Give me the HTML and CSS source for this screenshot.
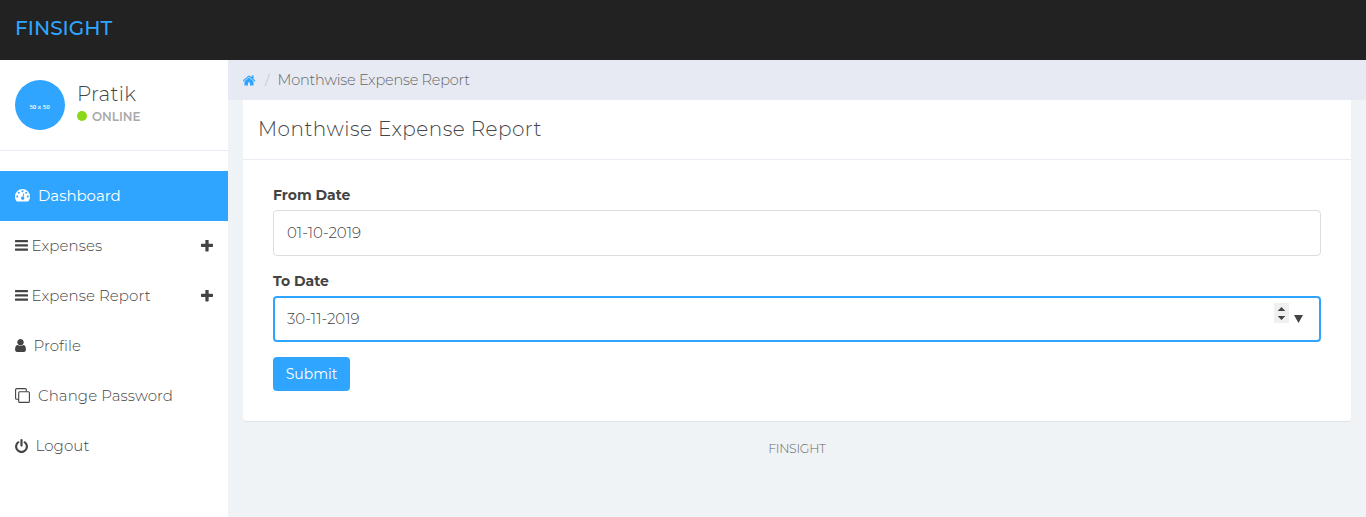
FILE: index.html
```html
<!DOCTYPE html>
<html lang="en">
<head>
<meta charset="utf-8">
<title>FINSIGHT</title>
<link rel="stylesheet" href="styles.css">
</head>
<body>
<header class="navbar"><a class="brand">FINSIGHT</a></header>
<div class="layout">
  <aside class="sidebar">
    <div class="profile">
      <div class="avatar">50 x 50</div>
      <div class="who">
        <div class="name">Pratik</div>
        <div class="status"><span class="dot"></span><span class="online">ONLINE</span></div>
      </div>
    </div>
    <nav class="menu">
      <a class="item active">
        <svg class="icon dash" viewBox="0 0 15 13"><path fill-rule="evenodd" d="M7.5 0A7.5 7.5 0 0 0 0 7.5c0 1.7.5 3.2 1.4 4.6.2.3.4.4.7.4h10.8c.3 0 .5-.1.7-.4.9-1.4 1.4-2.9 1.4-4.6A7.5 7.5 0 0 0 7.5 0zM2.2 6.500a1 1 0 1 1 0 2 1 1 0 0 1 0-2zM3.800 2.800a1 1 0 1 1 0 2 1 1 0 0 1 0-2zM7.500 1.200a1 1 0 1 1 0 2 1 1 0 0 1 0-2zM11.200 2.800a1 1 0 1 1 0 2 1 1 0 0 1 0-2zM12.800 6.500a1 1 0 1 1 0 2 1 1 0 0 1 0-2zM8.500 4.300l.8.200-.8 3.200a1.650 1.650 0 1 1-.85-.2z"/></svg>
        <span>Dashboard</span>
      </a>
      <a class="item">
        <svg class="icon bars" viewBox="0 0 13 11"><rect width="13" height="2.200" rx=".5"/><rect y="4.300" width="13" height="2.200" rx=".5"/><rect y="8.600" width="13" height="2.200" rx=".5"/></svg>
        <span>Expenses</span>
        <svg class="plus" viewBox="192 192 1408 1408"><path d="M1600 736v192q0 40-28 68t-68 28h-416v416q0 40-28 68t-68 28h-192q-40 0-68-28t-28-68v-416h-416q-40 0-68-28t-28-68v-192q0-40 28-68t68-28h416v-416q0-40 28-68t68-28h192q40 0 68 28t28 68v416h416q40 0 68 28t28 68z"/></svg>
      </a>
      <a class="item">
        <svg class="icon bars" viewBox="0 0 13 11"><rect width="13" height="2.200" rx=".5"/><rect y="4.300" width="13" height="2.200" rx=".5"/><rect y="8.600" width="13" height="2.200" rx=".5"/></svg>
        <span>Expense Report</span>
        <svg class="plus" viewBox="192 192 1408 1408"><path d="M1600 736v192q0 40-28 68t-68 28h-416v416q0 40-28 68t-68 28h-192q-40 0-68-28t-28-68v-416h-416q-40 0-68-28t-28-68v-192q0-40 28-68t68-28h416v-416q0-40 28-68t68-28h192q40 0 68 28t28 68v416h416q40 0 68 28t28 68z"/></svg>
      </a>
      <a class="item">
        <svg class="icon user" viewBox="256 128 1280 1536"><path d="M1536 1399q0 109-62.500 187t-150.500 78h-854q-88 0-150.500-78t-62.500-187q0-85 8.500-160.500t31.500-152 58.500-131 94-89 134.500-34.500q131 128 313 128t313-128q76 0 134.500 34.500t94 89 58.500 131 31.500 152 8.500 160.500zm-256-887q0 159-112.500 271.500t-271.500 112.500-271.500-112.500-112.500-271.500 112.500-271.500 271.500-112.500 271.500 112.500 112.500 271.500z"/></svg>
        <span>Profile</span>
      </a>
      <a class="item">
        <svg class="icon clone" viewBox="0 0 15 15"><g fill="none" stroke="currentColor" stroke-width="1.100"><rect x="3.700" y="3.700" width="10.700" height="10.700" rx="1"/><path d="M3.500 11.300H1.600a1 1 0 0 1-1-1V1.600a1 1 0 0 1 1-1h8.700a1 1 0 0 1 1 1v1.900"/></g></svg>
        <span>Change Password</span>
      </a>
      <a class="item">
        <svg class="icon power" viewBox="128 0 1536 1664"><path d="M1664 896q0 156-61 298t-164 245-245 164-298 61-298-61-245-164-164-245-61-298q0-182 80.500-343t226.500-270q43-32 95.500-25t83.500 50q32 42 24.500 94.500t-49.500 84.500q-98 74-151.500 181t-53.500 228q0 104 40.500 198.500t109.500 163.500 163.500 109.500 198.500 40.500 198.500-40.500 163.500-109.500 109.500-163.500 40.500-198.500q0-121-53.500-228t-151.500-181q-42-32-49.500-84.500t24.500-94.500q31-43 84-50t95 25q146 109 226.500 270t80.500 343zm-640-768v640q0 52-38 90t-90 38-90-38-38-90v-640q0-52 38-90t90-38 90 38 38 90z"/></svg>
        <span>Logout</span>
      </a>
    </nav>
  </aside>
  <main class="main">
    <div class="breadcrumb">
      <svg class="home" viewBox="70 250 1652 1290"><path d="M1408 992v480q0 26-19 45t-45 19h-384v-384h-256v384h-384q-26 0-45-19t-19-45v-480q0-1 .5-3t.5-3l575-474 575 474q1 2 1 6zm223-69l-62 74q-8 9-21 11h-3q-13 0-21-7l-692-577-692 577q-12 8-24 7-13-2-21-11l-62-74q-8-10-7-23.500t11-21.500l719-599q32-26 76-26t76 26l244 204v-195q0-14 9-23t23-9h192q14 0 23 9t9 23v408l219 182q10 8 11 21.500t-7 23.500z"/></svg>
      <span class="slash">/</span>
      <span class="crumb">Monthwise Expense Report</span>
    </div>
    <section class="panel">
      <h1 class="panel-heading">Monthwise Expense Report</h1>
      <form class="panel-body">
        <label class="label">From Date</label>
        <div class="field"><span>01-10-2019</span></div>
        <label class="label label-to">To Date</label>
        <div class="field focused">
          <span>30-11-2019</span>
          <span class="controls">
            <svg class="spinner" viewBox="0 0 15 20"><rect width="15" height="20" fill="#f0f0f0"/><path d="M3.700 8 7.500 4 11.300 8zM3.700 13h7.600L7.500 17z"/></svg>
            <svg class="arrow" viewBox="0 0 9 8"><path d="M0 0h9L4.500 8z"/></svg>
          </span>
        </div>
        <button class="submit" type="button">Submit</button>
      </form>
    </section>
    <footer class="footer">FINSIGHT</footer>
  </main>
</div>
</body>
</html>
```
FILE: styles.css
```css
* { box-sizing: border-box; }
body {
  margin: 0;
  height: 517px;
  overflow: hidden;
  background: #eff3f6;
  color: #444;
  font-family: Montserrat, Inter, "Open Sans", sans-serif;
  font-weight: 300;
  font-size: 14px;
}
svg { display: block; flex: none; fill: currentColor; }
span, .name { white-space: nowrap; }

.navbar { height: 60px; padding: 16px 15px; background: #222; }
.brand { color: #30a5ff; font-size: 20px; font-weight: 500; line-height: 24px; }
.layout { display: flex; height: 457px; }

.sidebar { width: 228px; flex: none; background: #fff; }
.profile { display: flex; gap: 12px; height: 91px; padding: 20px 15px; border-bottom: 1px solid #e9ecf2; }
.avatar {
  width: 50px; height: 50px; padding: 1px 1px 0 0;
  border-radius: 50%; background: #30a5ff; color: #fff;
  font-family: "Open Sans", sans-serif;
  font-size: 6px; font-weight: 600; line-height: 52px; text-align: center;
}
.name { font-size: 20px; line-height: 28px; letter-spacing: .3px; }
.status { display: flex; align-items: center; gap: 5px; height: 17px; }
.dot { width: 10px; height: 10px; margin-top: -1px; border-radius: 50%; background: #8ad919; }
.online { color: #aaa; font-size: 12px; font-weight: 600; }

.menu { padding-top: 20px; }
.item { display: flex; align-items: center; height: 50px; padding: 0 15px; font-size: 15px; letter-spacing: .08px; }
.item span { margin-top: -2px; }
.item .icon, .item .plus { margin-top: -1px; }
.item.active { background: #30a5ff; color: #fff; font-weight: 400; letter-spacing: -.05px; }
.dash { width: 15px; height: 13px; margin-right: 8px; }
.bars { width: 13px; height: 11px; margin-right: 3.6px; }
.user { width: 11px; height: 13px; margin-right: 7.500px; }
.clone { width: 15px; height: 15px; margin-right: 8px; }
.power { width: 13px; height: 14px; margin-right: 7.500px; }
.plus { width: 12px; height: 12px; margin-left: auto; }

.main { flex: 1; min-width: 0; }
.breadcrumb { display: flex; align-items: center; height: 40px; padding: 0 0 1px 15px; background: #e7eaf2; color: #666; }
.home { width: 13px; height: 11px; margin-top: 1px; color: #30a5ff; }
.slash { margin: 0 8px 0 9px; color: #bbb; }
.crumb { font-size: 14.500px; letter-spacing: -.22px; }
.panel {
  height: 322px; margin: 0 15px; background: #fff;
  border-radius: 0 0 4px 4px; border-bottom: 1px solid #dfe3e6;
}
.panel-heading {
  height: 60px; margin: 0; padding: 0 15px; border-bottom: 1px solid #e9ecf2;
  font-size: 20px; font-weight: 300; line-height: 58px; letter-spacing: .47px;
}
.panel-body { padding: 25px 30px; }
.label { display: block; height: 25px; font-size: 14px; font-weight: 700; line-height: 20px; }
.label-to { margin-top: 15px; }
.field {
  display: flex; align-items: center; height: 46px; padding: 0 13px 1px;
  border: 1px solid #ddd; border-radius: 4px; color: #444;
  font-size: 15px;
}
.focused { padding: 0 12px 1px; border: 2px solid #30a5ff; }
.controls { display: flex; align-items: center; gap: 5px; margin-left: auto; padding-right: 4px; }
.spinner { width: 15px; height: 20px; margin-bottom: 11px; }
.arrow { width: 9px; height: 8px; }
.submit {
  display: block; width: 77px; height: 34px; margin-top: 15px; padding: 0;
  border: 0; border-radius: 4px; background: #30a5ff; color: #fff;
  font: inherit; font-weight: 400;
}
.footer { margin-top: 17px; color: #666; font-size: 12.500px; line-height: 20px; letter-spacing: -.3px; text-align: center; }
```
